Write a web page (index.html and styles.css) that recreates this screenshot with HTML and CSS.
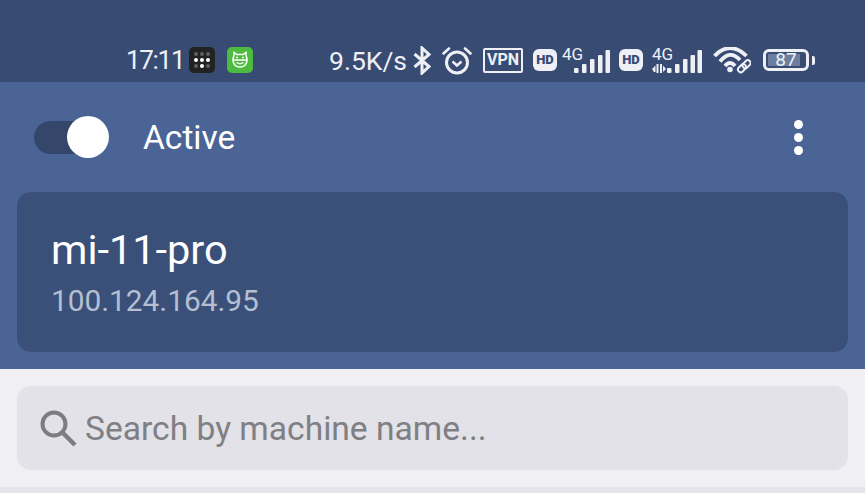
FILE: index.html
```html
<!DOCTYPE html>
<html lang="en">
<head>
<meta charset="UTF-8" />
<meta name="viewport" content="width=device-width, initial-scale=1" />
<title>Machines</title>
<link rel="stylesheet" href="styles.css">
</head>
<body>

<!-- Phone status bar -->
<div class="status-bar">
  <span class="time">17:11</span>
  <svg class="app-icon dots-app" width="26" height="26" viewBox="0 0 26 26">
    <rect width="26" height="26" rx="5" fill="#222"/>
    <g fill="#5f5f5f">
      <circle cx="7" cy="7" r="2"/><circle cx="13" cy="7" r="2"/><circle cx="19" cy="7" r="2"/>
      <circle cx="7" cy="19" r="2"/><circle cx="19" cy="19" r="2"/>
    </g>
    <g fill="#fff">
      <circle cx="7" cy="13" r="2"/><circle cx="13" cy="13" r="2"/><circle cx="19" cy="13" r="2"/>
      <circle cx="13" cy="19" r="2"/>
    </g>
  </svg>
  <svg class="app-icon green-app" width="26" height="26" viewBox="0 0 26 26">
    <rect width="26" height="26" rx="5" fill="#4cbb3f"/>
    <path d="M7 9 L7 5.500 L10 7.500 H16 L19 5.500 V9 Q20.500 11 20 14 Q19 20 13 20 Q7 20 6 14 Q5.500 11 7 9 Z" fill="none" stroke="#fff" stroke-width="1.500"/>
    <path d="M6 13 H20 M9.500 15.500 Q13 18 16.500 15.500" fill="none" stroke="#fff" stroke-width="1.300"/>
    <circle cx="10" cy="10.500" r="1" fill="#fff"/><circle cx="16" cy="10.500" r="1" fill="#fff"/>
  </svg>
  <span class="speed">9.5K/s</span>
  <svg class="bt" width="18" height="29" viewBox="0 0 18 29">
    <path d="M1.500 8 L16 20.500 L9 27 V2 L16 8.500 L1.500 21" fill="none" stroke="#eef0f5" stroke-width="3"/>
  </svg>
  <svg class="alarm" width="30" height="29" viewBox="0 0 30 29">
    <circle cx="15" cy="16.500" r="10.500" fill="none" stroke="#eef0f5" stroke-width="3"/>
    <path d="M10.500 15.500 L15 19.500 L19.500 15.500" fill="none" stroke="#eef0f5" stroke-width="2.500"/>
    <path d="M1.500 7.500 L7 2.500 M28.500 7.500 L23 2.500" fill="none" stroke="#eef0f5" stroke-width="2.600" stroke-linecap="round"/>
  </svg>
  <span class="vpn">VPN</span>
  <span class="hd hd-first">HD</span>
  <span class="net net-first">
    <span class="net-type">4G</span>
    <svg width="48" height="23" viewBox="0 0 48 23"><g fill="#eef0f5">
      <rect x="12" y="18" width="4.500" height="5" rx="1"/><rect x="20" y="14" width="4.500" height="9" rx="1"/>
      <rect x="28" y="9" width="4.500" height="14" rx="1"/><rect x="36" y="5" width="4.500" height="18" rx="1"/>
      <rect x="43.500" y="0" width="4.500" height="23" rx="1"/>
    </g></svg>
  </span>
  <span class="hd hd-second">HD</span>
  <span class="net net-second">
    <span class="net-type">4G</span>
    <svg width="51" height="23" viewBox="0 0 51 23"><g fill="#eef0f5">
      <path d="M0 19 L3.500 15.500 V22 H2 Z M4.500 14 H6.500 V23 H4.500 Z M8 14 H10 V23 H8 Z M11 15.500 L14 19 L11 22 Z"/>
      <rect x="15" y="18" width="4.500" height="5" rx="1"/><rect x="23" y="14" width="4.500" height="9" rx="1"/>
      <rect x="31" y="9" width="4.500" height="14" rx="1"/><rect x="38.500" y="5" width="4.500" height="18" rx="1"/>
      <rect x="45.500" y="0" width="4.500" height="23" rx="1"/>
    </g></svg>
  </span>
  <svg class="wifi" width="38" height="27" viewBox="0 0 38 27">
    <g fill="none" stroke="#eef0f5" stroke-width="3.800">
      <path d="M1.500 9 Q17 -7 33.500 9"/><path d="M7 14.500 Q17 2 27 13"/><path d="M12 19 Q17 13 22 19"/>
    </g>
    <circle cx="17" cy="22.500" r="2.800" fill="#eef0f5"/>
    <g fill="none" stroke="#eef0f5" stroke-width="2">
      <rect x="24.500" y="18.500" width="9" height="5.500" rx="2.700" transform="rotate(-45 29 21.200)"/>
      <rect x="29" y="14.500" width="9" height="5.500" rx="2.700" transform="rotate(-45 33.500 17.200)"/>
    </g>
  </svg>
  <span class="battery">
    <span class="battery-body"><span class="battery-fill"></span><span class="battery-num">87</span></span>
    <span class="battery-tip"></span>
  </span>
</div>

<div class="header">
  <div class="top-row">
    <div class="switch"><span class="switch-thumb"></span></div>
    <span class="active-label">Active</span>
    <div class="menu-dots"><span></span><span></span><span></span></div>
  </div>
  <div class="machine-card">
    <div class="machine-name">mi-11-pro</div>
    <div class="machine-ip">100.124.164.95</div>
  </div>
</div>

<div class="search-wrap">
  <div class="search-box">
    <svg class="search-icon" width="38" height="38" viewBox="0 0 38 38">
      <circle cx="15" cy="15" r="11.500" fill="none" stroke="#7d7d81" stroke-width="4"/>
      <path d="M23.500 23.500 L36 36" fill="none" stroke="#7d7d81" stroke-width="4.500"/>
    </svg>
    <span class="search-text">Search by machine name...</span>
  </div>
</div>
<div class="bottom-band"></div>

</body>
</html>
```

FILE: styles.css
```css
body {
  margin: 0;
  width: 865px;
  height: 493px;
  overflow: hidden;
  background: #efeff4;
  font-family: Roboto, "Liberation Sans", sans-serif;
}

/* Status bar */
.status-bar {
  display: flex;
  align-items: center;
  height: 44px;
  padding: 38px 0 0 126px;
  background: #384b73;
  color: #eef0f5;
}

.status-bar svg {
  flex: none;
}

.time {
  width: 57px;
  font-size: 26px;
  letter-spacing: -1.3px;
  white-space: nowrap;
}

.dots-app {
  margin-left: 6px;
}

.green-app {
  margin-left: 12px;
}

.speed {
  width: 77px;
  margin-left: 76px;
  margin-right: 1px;
  font-size: 26.5px;
  white-space: nowrap;
}

.bt {
  margin-left: 6px;
}

.alarm {
  margin-left: 11px;
}

.vpn {
  box-sizing: border-box;
  width: 40px;
  height: 25px;
  margin-left: 11px;
  border: 2.5px solid #eef0f5;
  border-radius: 2px;
  font-size: 16px;
  font-weight: 700;
  line-height: 20px;
  text-align: center;
}

.hd {
  width: 24px;
  height: 22px;
  border-radius: 6px;
  background: #eef0f5;
  color: #384b73;
  font-size: 13px;
  font-weight: 900;
  line-height: 22px;
  text-align: center;
}

.hd-first {
  margin-left: 10px;
}

.hd-second {
  margin-left: 9px;
}

.net {
  position: relative;
  display: flex;
}

.net-first {
  margin-left: 5px;
}

.net-second {
  margin-left: 9px;
}

.net svg {
  margin-top: 3px;
}

/* 4G sits over the short end of the signal bars */
.net-type {
  position: absolute;
  top: 0;
  left: 0;
  font-size: 17px;
  line-height: 15px;
}

.wifi {
  margin-left: 10px;
}

.battery {
  display: flex;
  align-items: center;
  margin-left: 12px;
}

.battery-body {
  position: relative;
  box-sizing: border-box;
  display: block;
  width: 46px;
  height: 22px;
  border: 3px solid #eef0f5;
  border-radius: 6px;
}

.battery-fill {
  display: block;
  width: 32px;
  height: 12px;
  margin: 2px 0 0 2px;
  background: #6c7d9d;
}

.battery-num {
  position: absolute;
  top: 0;
  left: 0;
  width: 100%;
  font-size: 19px;
  line-height: 16px;
  text-align: center;
}

.battery-tip {
  width: 3px;
  height: 9px;
  margin-left: 3px;
  border-radius: 0 2px 2px 0;
  background: #eef0f5;
}

/* Blue header */
.header {
  height: 287px;
  background: #4a6495;
}

.top-row {
  display: flex;
  align-items: center;
  height: 110px;
  padding: 0 62px 0 34px;
}

.switch {
  position: relative;
  width: 66px;
  height: 33px;
  border-radius: 17px;
  background: #344669;
}

.switch-thumb {
  position: absolute;
  top: -4.5px;
  right: -9px;
  width: 42px;
  height: 42px;
  border-radius: 50%;
  background: #fff;
}

.active-label {
  flex: 1;
  margin-left: 43px;
  color: #fff;
  font-size: 33.5px;
}

.menu-dots {
  display: flex;
  flex-direction: column;
  gap: 4px;
}

.menu-dots span {
  width: 9px;
  height: 9px;
  border-radius: 50%;
  background: #fff;
}

.machine-card {
  box-sizing: border-box;
  height: 160px;
  margin: 0 17px;
  padding: 33px 34px 0;
  border-radius: 14px;
  background: #3a5079;
}

.machine-name {
  color: #fff;
  font-size: 41.5px;
  line-height: 50px;
}

.machine-ip {
  margin-top: 9px;
  color: #b4bfd2;
  font-size: 29.8px;
  line-height: 34px;
}

/* Search */
.search-wrap {
  padding: 17px;
}

.search-box {
  display: flex;
  align-items: center;
  height: 84px;
  padding-left: 22px;
  border-radius: 14px;
  background: #e2e2e8;
}

.search-text {
  margin-left: 8px;
  color: #7f7f84;
  font-size: 33.6px;
}

.bottom-band {
  height: 6px;
  background: #e4e4ea;
}
```
